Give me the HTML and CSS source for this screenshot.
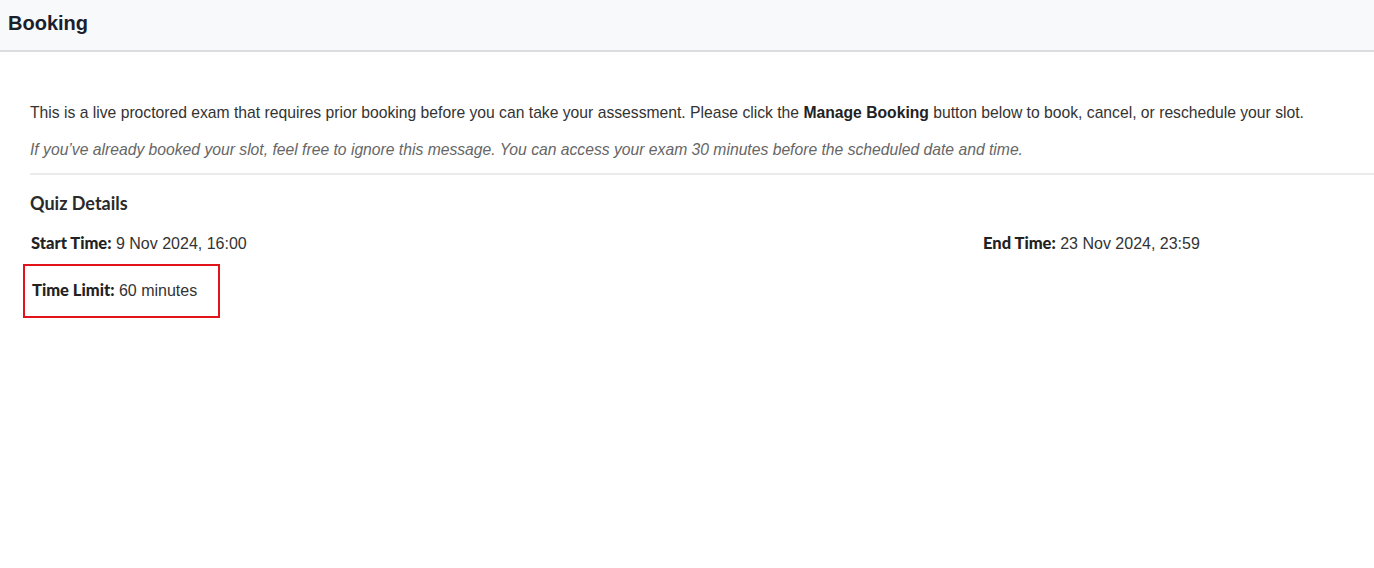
FILE: index.html
```html
<!DOCTYPE html>
<html>
<head>
<meta charset="utf-8">
<link rel="stylesheet" href="styles.css">
</head>
<body>
<header class="topbar"><h1 class="title">Booking</h1></header>
<main class="content">
  <p class="intro">This is a live proctored exam that requires prior booking before you can take your assessment. Please click the <strong>Manage Booking</strong> button below to book, cancel, or reschedule your slot.</p>
  <p class="note">If you’ve already booked your slot, feel free to ignore this message. You can access your exam 30 minutes before the scheduled date and time.</p>
  <hr class="divider">
  <h2 class="section">Quiz Details</h2>
  <div class="details">
    <div class="item"><span class="label">Start Time:</span> 9 Nov 2024, 16:00</div>
    <div class="item"><span class="label">End Time:</span> 23 Nov 2024, 23:59</div>
    <div class="item highlight"><span class="label">Time Limit:</span> 60 minutes</div>
  </div>
</main>
</body>
</html>
```
FILE: styles.css
```css
html, body { margin: 0; padding: 0; background: #fff; }
body { font-family: "Liberation Sans", Arial, sans-serif; color: #333; }
.topbar {
  height: 50px;
  background: #f8f9fb;
  border-bottom: 2px solid #dcdde0;
  display: flex;
  align-items: center;
  padding: 0 8px 4px;
  box-sizing: border-box;
  height: 52px;
}
.title { margin: 0; font-size: 20px; font-weight: bold; color: #1b1e2b; }
.content { padding: 0 0 0 30px; }
.intro { margin: 51px 0 0; font-size: 15.7px; line-height: 20px; }
.intro strong { color: #222; }
.note { margin: 17px 0 0; font-size: 15.7px; line-height: 20px; font-style: italic; color: #666; }
.divider { margin: 13px 0 0; border: 0; border-top: 2px solid #ebebeb; }
.section { margin: 17px 0 0; font-family: Lato, sans-serif; font-size: 18px; font-weight: bold; color: #2a2a2a; line-height: 22px; }
.details {
  display: grid;
  grid-template-columns: 952px 1fr;
  row-gap: 26px;
  margin-top: 19px;
  font-size: 16px;
  line-height: 20px;
  color: #333;
}
.label { font-family: Lato, sans-serif; font-weight: 900; font-size: 16.5px; color: #222; }
.item { padding-left: 1px; }
.highlight {
  justify-self: start;
  margin-left: -7px;
  margin-top: -16px;
  padding: 14px 21px 15px 7px;
  border: 2px solid #e2131a;
}
```
